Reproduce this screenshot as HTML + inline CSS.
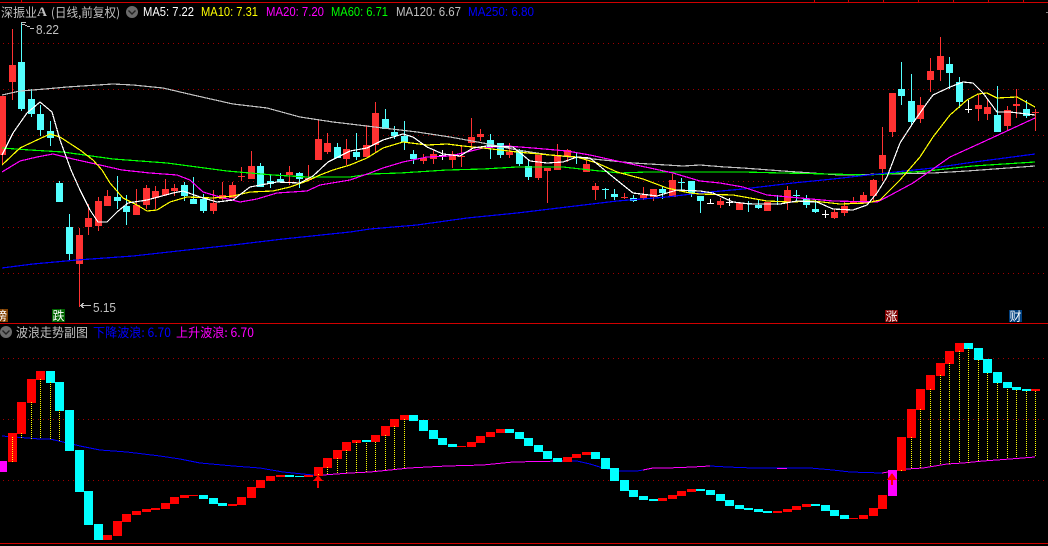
<!DOCTYPE html>
<html lang="zh">
<head>
<meta charset="utf-8">
<title>波浪走势副图</title>
<style>
html,body{margin:0;padding:0;background:#000;width:1048px;height:546px;overflow:hidden}
svg{display:block;position:absolute;left:0;top:0}
.t{font-family:"Liberation Sans","WenQuanYi Zen Hei",sans-serif;font-size:13px}
.c{font-family:"WenQuanYi Zen Hei","Noto Sans CJK SC",sans-serif;font-size:12.5px}
.l{fill:none;stroke-width:1.2;shape-rendering:crispEdges}
.s{fill:none;stroke-width:1;shape-rendering:crispEdges}
.k{fill:none;shape-rendering:crispEdges}
</style>
</head>
<body>
<svg width="1048" height="546" viewBox="0 0 1048 546" xmlns="http://www.w3.org/2000/svg">
<rect width="1048" height="546" fill="#000"/>

<!-- frame lines -->
<path class="k" stroke="#d00000" d="M0 2.5H1048M0 323.5H1048M0 543.5H1048M21.5 0V2M814.5 0V2M848.5 0V2M883.5 0V2M918.5 0V2M953.5 0V2M988.5 0V2M1023.5 0V2"/>
<path class="k" stroke="#808080" d="M1046 12.5h2"/>

<!-- grid -->
<path class="k" stroke="#a00000" stroke-dasharray="1 4" d="M3 43.5H1048M3 89.5H1048M3 135.5H1048M3 181.5H1048M3 227.5H1048M3 273.5H1048M3 358.5H1048M3 419.5H1048M3 480.5H1048"/>

<!-- red wicks -->
<path class="k" stroke="#ff3232" stroke-width="1" d="M2.5 96V165M12.5 29V100M79.5 228V307M88.5 204V235M98.5 197V231M107.5 190V206M136.5 189V215M146.5 185V209M155.5 186V209M165.5 179V196M174.5 184V196M213.5 190V214M222.5 182V200M232.5 182V198M241.5 167V181M251.5 151V179M289.5 166V185M308.5 165V180M318.5 120V160M327.5 133V154M346.5 139V165M366.5 125V157M375.5 102V153M423.5 154V164M433.5 150V164M452.5 151V168M461.5 145V167M471.5 118V150M480.5 129V141M509.5 143V158M538.5 155V180M547.5 168V203M557.5 144V170M567.5 149V162M586.5 160V172M595.5 183V200M624.5 193V199M643.5 187V200M653.5 189V201M672.5 174V197M720.5 198V208M739.5 203V210M767.5 202V211M787.5 186V210M834.5 209V219M844.5 202V216M853.5 197V204M863.5 192V204M873.5 179V201M882.5 127V181M892.5 93V137M920.5 97V123M930.5 58V92M940.5 37V81M978.5 94V121M987.5 100V120M1007.5 106V130M1016.5 89V118M1035.5 109V131"/>
<!-- red bodies -->
<path class="k" stroke="#ff3232" stroke-width="7" d="M2.5 96V155M12.5 65V82M79.5 235V264M88.5 218V227M98.5 201V226M107.5 196V206M136.5 205V215M146.5 188V205M155.5 191V198M165.5 189V195M174.5 188V191M213.5 203V211M222.5 195V199M232.5 185V198M241.5 176V177M251.5 166V179M289.5 172V175M308.5 178V180M318.5 139V160M327.5 143V152M346.5 149V159M366.5 145V157M375.5 113V145M423.5 158V161M433.5 154V159M452.5 154V160M461.5 156V157M471.5 137V143M480.5 134V137M509.5 152V155M538.5 155V178M547.5 168V171M557.5 155V170M567.5 150V156M586.5 164V172M595.5 186V190M624.5 197V198M643.5 195V198M653.5 189V197M672.5 180V197M720.5 201V205M739.5 203V210M767.5 202V211M787.5 190V202M834.5 212V218M844.5 206V213M853.5 201V204M863.5 195V203M873.5 180V196M882.5 155V169M892.5 93V132M920.5 105V119M930.5 71V80M940.5 56V70M978.5 105V109M987.5 107V114M1007.5 110V126M1016.5 104V106M1035.5 112V113"/>
<!-- cyan wicks -->
<path class="k" stroke="#54ffff" stroke-width="1" d="M21.5 22V111M31.5 89V117M40.5 105V136M50.5 121V146M59.5 181V202M69.5 214V260M117.5 176V209M126.5 195V225M184.5 182V201M193.5 177V204M203.5 194V213M260.5 163V187M270.5 175V188M280.5 173V183M299.5 172V188M337.5 143V158M356.5 133V160M385.5 109V128M394.5 126V139M404.5 121V150M413.5 150V164M490.5 134V159M500.5 143V158M519.5 149V166M528.5 159V180M576.5 152V164M605.5 188V199M614.5 189V200M633.5 195V202M662.5 186V199M681.5 178V190M691.5 181V197M700.5 196V213M748.5 201V212M758.5 199V209M777.5 195V205M796.5 190V201M806.5 195V208M815.5 199V213M901.5 62V105M911.5 74V125M949.5 57V89M959.5 77V108M997.5 86V132M1026.5 100V118"/>
<!-- cyan bodies -->
<path class="k" stroke="#54ffff" stroke-width="7" d="M21.5 62V109M31.5 99V114M40.5 114V130M50.5 131V138M59.5 183V202M69.5 227V254M117.5 197V201M126.5 206V212M184.5 185V196M193.5 199V204M203.5 199V211M260.5 166V187M270.5 181V184M280.5 179V182M299.5 173V179M337.5 147V158M356.5 152V157M385.5 119V129M394.5 132V136M404.5 136V142M413.5 154V159M490.5 140V147M500.5 143V155M519.5 150V164M528.5 166V177M576.5 157V158M605.5 189V190M614.5 194V197M633.5 198V201M662.5 189V193M681.5 182V183M691.5 181V193M700.5 196V201M748.5 203V204M758.5 205V208M777.5 201V202M796.5 195V196M806.5 199V205M815.5 209V212M901.5 89V96M911.5 101V122M949.5 64V73M959.5 82V102M997.5 115V132M1026.5 109V116"/>
<!-- white crosses -->
<path class="k" stroke="#ffffff" d="M442.5 150V160M439 155.5h7M710.5 199V203M707 203.5h7M729.5 198V206M726 202.5h7M825.5 210V218M822 214.5h7M968.5 100V113M965 109.5h7"/>

<!-- MA lines -->
<polyline class="l" stroke="#c0c0c0" points="2,95 20,91 45,89 67,87 113,84 133,85 163,88 193,95 233,104 267,108 300,117 333,122 350,124 383,128 417,132 450,137 483,143 517,150 550,155 583,158 633,163 683,166 700,165 725,167 743,168 783,171 840,175 887,174 933,173 967,171 1035,166"/>
<polyline class="l" stroke="#00ff00" points="2,148 30,150 63,152 113,159 167,163 227,171 273,175 307,177 350,177 370,174 400,173 447,170 483,169 517,167 563,167 590,170 620,173 647,172 700,172 743,172 782,173 830,174 867,175 887,174 927,171 973,166 1035,162"/>
<polyline class="l" stroke="#0000ff" points="2,268 33,264 77,260 133,256 187,250 233,245 283,239 350,232 370,229 417,225 467,218 517,213 567,207 617,201 667,197 700,193 710,192 743,189 793,183 833,179 877,174 933,168 967,163 1035,154"/>
<polyline class="l" stroke="#ff00ff" points="2,172 20,161 37,157 53,154 73,159 100,165 122,170 150,173 177,175 190,180 203,192 220,197 240,202 257,199 277,193 307,191 320,185 350,180 370,173 383,168 403,162 427,157 450,156 467,152 483,148 507,146 533,148 567,151 590,155 617,161 650,168 673,173 700,181 720,183 743,187 767,195 800,198 833,201 877,202 887,197 913,183 950,157 983,142 1035,118"/>
<polyline class="l" stroke="#ffff00" points="2,165 20,148 37,140 50,134 60,137 80,150 93,160 102,170 110,183 123,198 137,205 147,211 157,210 170,202 187,197 213,198 233,196 250,192 273,191 290,187 307,181 320,175 333,170 350,165 367,158 383,148 403,142 427,145 447,144 463,146 483,148 517,152 550,155 577,157 597,163 617,172 643,179 667,188 690,193 700,194 733,195 767,201 790,202 813,201 840,204 867,203 880,200 900,180 920,157 933,137 950,115 967,100 978,94 987,93 997,98 1017,97 1035,107"/>
<polyline class="l" stroke="#ffffff" points="2,155 13,133 27,113 40,102 52,112 60,140 71,170 80,190 90,210 98,222 107,222 117,212 128,203 147,200 173,193 183,191 200,197 217,202 233,200 250,187 277,182 300,183 313,176 328,162 350,151 367,148 383,140 403,134 413,137 427,147 443,154 460,156 473,148 487,146 513,147 530,161 547,163 563,162 577,157 590,158 613,177 633,193 657,196 677,190 700,191 713,193 733,202 750,204 780,204 797,201 817,202 833,209 853,210 867,205 877,193 887,177 900,143 913,123 927,103 933,95 950,87 963,82 973,83 983,93 997,112 1010,112 1035,115"/>

<!-- high / low markers -->
<path class="k" stroke="#c0c0c0" d="M21 22.5h5M21 24.5h4M25 25.5h2M27 26.5h3M30 28.5h4"/>
<text class="t" x="36" y="34" fill="#c0c0c0" textLength="23" lengthAdjust="spacingAndGlyphs">8.22</text>
<path class="k" stroke="#c0c0c0" d="M80 305.5H91M81 304.5h2M81 306.5h2M82 303.5h2M82 307.5h2"/>
<text class="t" x="93" y="312" fill="#c0c0c0" textLength="23" lengthAdjust="spacingAndGlyphs">5.15</text>

<!-- header -->
<text class="c" x="1" y="17" fill="#c0c0c0" textLength="36" lengthAdjust="spacingAndGlyphs">深振业</text>
<text x="37" y="16" fill="#c0c0c0" font-family="Liberation Serif,serif" font-weight="700" font-size="13" textLength="10" lengthAdjust="spacingAndGlyphs">A</text>
<text class="c" x="51" y="17" fill="#c0c0c0" textLength="69" lengthAdjust="spacingAndGlyphs">(日线,前复权)</text>
<circle cx="132" cy="12" r="6" fill="#6b6b6b"/>
<path d="M128.5 10.5l3.5 3.5 3.5-3.5" fill="none" stroke="#222" stroke-width="1.4"/>
<text class="t" x="143" y="16" fill="#ffffff" textLength="51" lengthAdjust="spacingAndGlyphs">MA5: 7.22</text>
<text class="t" x="201" y="16" fill="#ffff00" textLength="57" lengthAdjust="spacingAndGlyphs">MA10: 7.31</text>
<text class="t" x="266" y="16" fill="#ff00ff" textLength="58" lengthAdjust="spacingAndGlyphs">MA20: 7.20</text>
<text class="t" x="331" y="16" fill="#00ff00" textLength="57" lengthAdjust="spacingAndGlyphs">MA60: 6.71</text>
<text class="t" x="396" y="16" fill="#c0c0c0" textLength="65" lengthAdjust="spacingAndGlyphs">MA120: 6.67</text>
<text class="t" x="468" y="16" fill="#0000ff" textLength="66" lengthAdjust="spacingAndGlyphs">MA250: 6.80</text>

<!-- badges -->
<rect x="0" y="309" width="8" height="13" fill="#804000"/>
<text class="c" x="-5" y="320" fill="#fff" style="font-size:12px">榜</text>
<rect x="52" y="309" width="13" height="13" fill="#006400"/>
<text class="c" x="52.5" y="320" fill="#fff" style="font-size:12px">跌</text>
<rect x="885" y="310" width="13" height="12" fill="#800000"/>
<text class="c" x="885.5" y="320.5" fill="#fff" style="font-size:12px">涨</text>
<rect x="1009" y="310" width="13" height="12" fill="#004080"/>
<text class="c" x="1009.5" y="320.5" fill="#fff" style="font-size:12px">财</text>

<!-- sub header -->
<circle cx="6" cy="332" r="6" fill="#6b6b6b"/>
<path d="M2.5 330.5l3.5 3.5 3.5-3.5" fill="none" stroke="#222" stroke-width="1.4"/>
<text class="c" x="16" y="337" fill="#c0c0c0" textLength="72" lengthAdjust="spacingAndGlyphs">波浪走势副图</text>
<text class="c" x="93" y="337" fill="#0000ff" textLength="78" lengthAdjust="spacingAndGlyphs">下降波浪: 6.70</text>
<text class="c" x="176" y="337" fill="#ff00ff" textLength="78" lengthAdjust="spacingAndGlyphs">上升波浪: 6.70</text>

<!-- sub: trend lines -->
<polyline class="s" stroke="#0000ff" points="2,436 27,438 40,439 50,439 63,442 80,446 100,450 127,452 160,456 180,459 200,463 233,466 260,468 283,472 313,475 323,475"/>
<polyline class="s" stroke="#ff00ff" points="323,475 350,473 370,472 390,470 409,468 447,466 483,465 513,462 563,461"/>
<polyline class="s" stroke="#0000ff" points="563,461 577,461 590,464 603,468 620,471 637,471 643,470"/>
<polyline class="s" stroke="#ff00ff" points="643,470 653,468 667,468 693,467 710,466"/>
<polyline class="s" stroke="#0000ff" points="710,466 727,467 753,468 777,468 810,468 833,470 850,472 882,473"/>
<path class="k" stroke="#ff00ff" d="M777 468.5h10"/>
<polyline class="s" stroke="#ff00ff" points="882,473 907,469 923,468 947,464 963,463 983,461 1010,459 1035,457"/>

<!-- sub: red boxes -->
<path class="k" stroke="#ff0000" stroke-width="9" d="M12.5 433V462M21.5 402V434M31.5 379V403M40.5 371V380M107.5 535V540M117.5 521V536M126.5 514V522M136.5 511V515M146.5 509V512M155.5 508V510M165.5 503V509M174.5 497V504M184.5 495V498M193.5 495V496M232.5 504V506M241.5 497V505M251.5 487V498M260.5 480V488M270.5 476V481M280.5 475V477M308.5 475V477M318.5 467V476M327.5 458V468M337.5 450V459M346.5 442V451M356.5 440V443M375.5 435V442M385.5 426V436M394.5 419V427M404.5 415V420M461.5 446V447M471.5 442V447M480.5 436V443M490.5 432V437M500.5 429V433M567.5 457V462M576.5 454V458M586.5 452V455M662.5 498V501M672.5 495V499M681.5 491V496M691.5 489V492M777.5 511V513M787.5 509V512M796.5 506V510M806.5 504V507M853.5 518V519M863.5 515V519M873.5 508V516M882.5 495V509M901.5 437V471M911.5 409V438M920.5 389V410M930.5 375V390M940.5 363V376M949.5 351V364M959.5 343V352M1035.5 389V391"/>
<!-- sub: cyan boxes -->
<path class="k" stroke="#00ffff" stroke-width="9" d="M50.5 371V383M59.5 382V411M69.5 410V451M79.5 450V492M88.5 491V525M98.5 524V540M203.5 495V499M213.5 498V504M222.5 503V506M289.5 475V477M299.5 476V477M366.5 440V442M413.5 415V421M423.5 420V431M433.5 430V439M442.5 438V445M452.5 444V447M509.5 429V433M519.5 432V439M528.5 438V446M538.5 445V452M547.5 451V459M557.5 458V462M595.5 452V459M605.5 458V469M614.5 468V481M624.5 480V491M633.5 490V497M643.5 496V500M653.5 499V501M700.5 489V491M710.5 490V495M720.5 494V501M729.5 500V506M739.5 505V509M748.5 508V510M758.5 509V512M767.5 511V513M815.5 504V506M825.5 505V511M834.5 510V516M844.5 515V519M968.5 343V349M978.5 348V360M987.5 359V373M997.5 372V383M1007.5 382V388M1016.5 387V390M1026.5 389V391"/>
<!-- sub: magenta boxes -->
<path class="k" stroke="#ff00ff" stroke-width="9" d="M2.5 461V472M892.5 470V496"/>

<!-- sub: yellow dotted -->
<path class="k" stroke="#ffff00" stroke-dasharray="1 1" d="M12.5 437V462M21.5 433V438M31.5 402V439M40.5 379V439M50.5 382V439M59.5 410V442M318.5 474V476M327.5 467V475M337.5 458V474M346.5 450V473M356.5 442V473M366.5 443V472M375.5 442V472M385.5 435V471M394.5 426V470M404.5 419V469M901.5 470V471M911.5 437V469M920.5 409V468M930.5 389V466M940.5 375V465M949.5 363V464M959.5 351V463M968.5 348V463M978.5 360V461M987.5 373V460M997.5 383V459M1007.5 389V459M1016.5 390V457M1026.5 391V457M1035.5 391V456"/>

<!-- sub: arrows -->
<path d="M318 475l5 6h-4v7h-2v-7h-4z" fill="#ff0000" shape-rendering="crispEdges"/>
<path d="M892 473l5 7h-4v5h-2v-5h-4z" fill="#ff0000" shape-rendering="crispEdges"/>
</svg>
</body>
</html>
